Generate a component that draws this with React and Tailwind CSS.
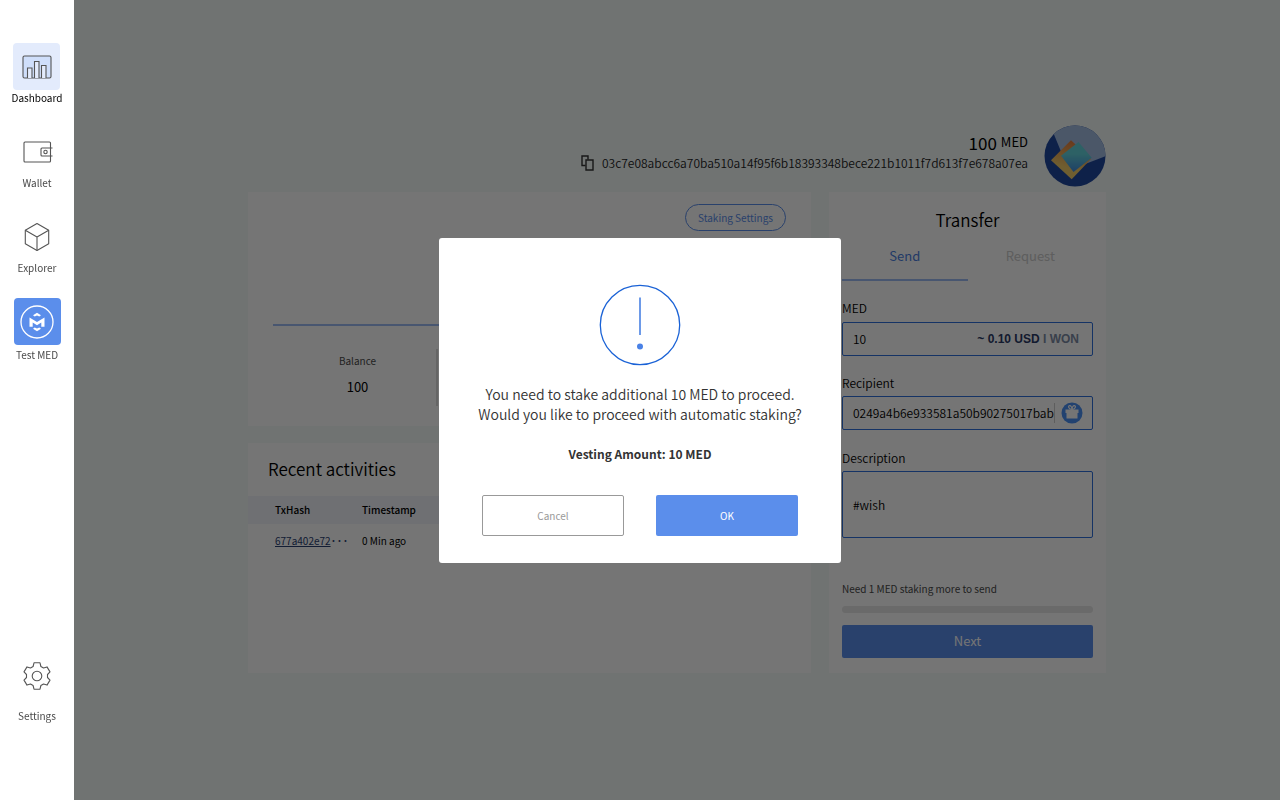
import { useState } from 'react';

const NAV_ITEMS = [
  { id: 'dashboard', label: 'Dashboard', Icon: DashboardIcon },
  { id: 'wallet', label: 'Wallet', Icon: WalletIcon },
  { id: 'explorer', label: 'Explorer', Icon: ExplorerIcon },
];

const ACTIVITIES = [{ hash: '677a402e72', time: '0 Min ago' }];

function DashboardIcon() {
  return (
    <svg width="30" height="24" viewBox="0 0 30 24" fill="none" stroke="#555" strokeWidth="1.1">
      <rect x="1" y="1" width="28" height="22" rx="1.5" fill="#cfdefa" />
      <path fill="#e3ebfc" d="M5.5 23V13h4.5v10M12.500 23V6.500h4.500V23M19.500 23V10.500H24V23" />
    </svg>
  );
}

function WalletIcon() {
  return (
    <svg width="30" height="22" viewBox="-1 0 30 22" overflow="visible" fill="none" stroke="#555" strokeWidth="1.1">
      <path d="M27.500 7V2a1 1 0 0 0-1-1H2a1 1 0 0 0-1 1v18a1 1 0 0 0 1 1h24.500a1 1 0 0 0 1-1v-5" />
      <path d="M29.500 7H19a1 1 0 0 0-1 1v6a1 1 0 0 0 1 1h10.500M27.500 7v8" />
      <circle cx="22.500" cy="11" r="1.700" />
    </svg>
  );
}

function ExplorerIcon() {
  return (
    <svg width="26" height="30" viewBox="0 0 26 30" fill="none" stroke="#555" strokeWidth="1.1" strokeLinejoin="round">
      <path d="M13 1.500 24.700 8.200v13.600L13 28.500 1.300 21.800V8.200z" />
      <path d="M1.300 8.200 13 15l11.700-6.800M13 15v13.500" />
    </svg>
  );
}

function SettingsIcon() {
  return (
    <svg width="28" height="28" viewBox="0 0 28 28" fill="none" stroke="#555" strokeWidth="1.1" strokeLinejoin="round">
      <path d="M11 .800h6l.900 3.700 2.600 1.500 3.500-1.100 3 5-2.500 2.600v3l2.500 2.600-3 5-3.500-1.100-2.600 1.500-.900 3.700h-6l-.900-3.700-2.600-1.500L4 23.100l-3-5 2.500-2.600v-3L1 9.900l3-5L7.500 6l2.600-1.500z" />
      <circle cx="14" cy="14" r="4.800" />
    </svg>
  );
}

function MedLogo() {
  return (
    <svg width="34" height="34" viewBox="0 0 34 34" fill="none">
      <circle cx="17" cy="17" r="16" stroke="#fff" strokeWidth="1.3" />
      <path fill="#fff" d="M9.500 12.500 17 17l7.500-4.500v9.300h-3.200v-4.200L17 20.300l-4.300-2.700v4.200H9.500z" />
      <path fill="#fff" d="m13 10.300 4-2.500 4 2.500-1.700 1.100-2.300-1-2.300 1zM13 23.700l4 2.500 4-2.500-1.700-1.100-2.300 1-2.300-1z" />
    </svg>
  );
}

function CopyIcon() {
  return (
    <svg width="13" height="16" viewBox="0 0 13 16" fill="none" stroke="#333" strokeWidth="1.4">
      <path d="M4.500 10.500H1V1h6v3.500" />
      <path d="M5 5h7v10H5z" />
    </svg>
  );
}

function GiftIcon() {
  return (
    <svg width="22" height="22" viewBox="0 0 22 22" fill="none">
      <circle cx="11" cy="11" r="10.500" fill="#4a90f5" />
      <path fill="#fff" d="M4.500 7.500h13V11h-1v5.500h-11V11h-1z" />
      <path stroke="#fff" strokeWidth="1.2" d="M11 7.500C8 7.500 6.500 4 8.500 3.700 10 3.500 11 5.500 11 7.500c0-2 1-4 2.500-3.800C15.500 4 14 7.500 11 7.500z" />
    </svg>
  );
}

function Avatar() {
  return (
    <svg className="shrink-0" width="62" height="62" viewBox="5 5 62 62">
      <defs>
        <clipPath id="avatar-clip">
          <circle cx="36" cy="36" r="30.500" />
        </clipPath>
        <linearGradient id="avatar-gold" x1="0.6" y1="0" x2="0.4" y2="0.7">
          <stop offset="0" stopColor="#e37a3c" />
          <stop offset="1" stopColor="#f2cc6a" />
        </linearGradient>
        <linearGradient id="avatar-teal" x1="0.5" y1="0" x2="0.5" y2="1">
          <stop offset="0.4" stopColor="#63d3dc" />
          <stop offset="1" stopColor="#418be0" />
        </linearGradient>
      </defs>
      <g clipPath="url(#avatar-clip)">
        <path fill="#2049a0" d="M0 0h72v72H0z" />
        <path fill="#a3bde3" d="M9 0 28 46l13 0L72 34V0z" />
        <path fill="url(#avatar-gold)" d="m32 20.300 20 18.700-19.300 20.300L12 40.300z" />
        <path fill="url(#avatar-teal)" d="m39.500 22 13.200 15.700L34.500 52 22 35.700z" />
      </g>
    </svg>
  );
}

function Sidebar() {
  return (
    <nav className="fixed inset-y-0 left-0 z-30 flex w-[74px] flex-col items-center bg-white pt-[43px] pb-[76px] text-[10px] leading-4 text-[#4a4a4a]">
      {NAV_ITEMS.map(({ id, label, Icon }) => (
        <a
          key={id}
          href={`#${id}`}
          className={`mb-[22px] flex flex-col items-center ${id === 'dashboard' ? 'text-black' : ''}`}
        >
          <span
            className={`flex h-[47px] w-[47px] items-center justify-center rounded ${
              id === 'dashboard' ? 'bg-[#e3ebfc]' : ''
            }`}
          >
            <Icon />
          </span>
          {label}
        </a>
      ))}
      <a href="#test" className="flex flex-col items-center gap-[2px]">
        <span className="flex h-[47px] w-[47px] items-center justify-center rounded bg-[#5b8eeb]">
          <MedLogo />
        </span>
        Test MED
      </a>
      <a href="#settings" className="mt-auto flex flex-col items-center gap-[18px]">
        <SettingsIcon />
        Settings
      </a>
    </nav>
  );
}

function AccountHeader() {
  return (
    <header className="flex items-center justify-end gap-4">
      <div className="flex flex-col items-end pb-[10px]">
        <div className="flex items-start gap-1 text-black">
          <span className="text-[17px] leading-6">100</span>
          <span className="text-[13px] leading-[22px]">MED</span>
        </div>
        <div className="flex items-center gap-2 text-[12px] leading-4 font-[350] text-[#222]">
          <button type="button" aria-label="Copy address">
            <CopyIcon />
          </button>
          <span>03c7e08abcc6a70ba510a14f95f6b18393348bece221b1011f7d613f7e678a07ea</span>
        </div>
      </div>
      <Avatar />
    </header>
  );
}

function BalanceCard() {
  return (
    <section className="flex h-[234px] flex-col bg-white pt-3">
      <button
        type="button"
        className="mr-[25px] h-[27px] self-end rounded-full border border-[#5b8eeb] px-3 text-[10px] text-[#5b8eeb]"
      >
        Staking Settings
      </button>
      <div className="mx-[25px] mt-[93px] h-[2px] bg-[#9dbcf3]" />
      <div className="mt-[23px] ml-[31px] flex h-[57px] w-[159px] flex-col items-center gap-2 border-r-2 border-[#ddd]">
        <span className="pt-1 text-[10px] leading-4 text-[#4a4a4a]">Balance</span>
        <span className="text-[13px] leading-5 text-black">100</span>
      </div>
    </section>
  );
}

function RecentActivities() {
  return (
    <section className="flex-1 bg-white pt-[14px]">
      <h2 className="px-5 text-[17px] leading-6 font-[350] text-black">Recent activities</h2>
      <table className="mt-[15px] w-full text-left text-[10px] leading-4">
        <thead className="bg-[#f1f4fa] text-black">
          <tr className="h-[28px]">
            <th className="w-[114px] pl-[27px] font-medium">TxHash</th>
            <th className="font-medium">Timestamp</th>
          </tr>
        </thead>
        <tbody>
          {ACTIVITIES.map((item) => (
            <tr key={item.hash} className="h-[35px]">
              <td className="pl-[27px] text-[#2a4172]">
                <a href="#tx" className="underline">
                  {item.hash}
                </a>
                <span className="font-bold">···</span>
              </td>
              <td className="text-black">{item.time}</td>
            </tr>
          ))}
        </tbody>
      </table>
    </section>
  );
}

function TransferCard() {
  const [tab, setTab] = useState('send');

  const tabClass = (id) =>
    `h-[36px] pb-3 text-[13px] leading-5 border-b-2 ${
      tab === id ? 'border-[#9dbcf3] text-[#4a7fe0]' : 'border-transparent text-[#ccc]'
    }`;

  return (
    <section className="flex w-[277px] shrink-0 flex-col bg-white px-[13px] pt-4 pb-[15px] text-[12px] leading-4 text-black">
      <h2 className="text-center text-[17px] leading-6 font-[350]">Transfer</h2>
      <div className="mt-[13px] grid grid-cols-2">
        <button type="button" className={tabClass('send')} onClick={() => setTab('send')}>
          Send
        </button>
        <button type="button" className={tabClass('request')} onClick={() => setTab('request')}>
          Request
        </button>
      </div>

      <label htmlFor="amount" className="mt-[19px] font-[350]">
        MED
      </label>
      <div className="mt-[6px] flex h-[34px] items-center rounded-xs border border-[#2f6fdd] px-[10px]">
        <input id="amount" className="w-0 flex-1 font-[350] outline-none" defaultValue="10" />
        <span className="pr-[3px] font-['Liberation_Sans',sans-serif] font-bold text-[#2b3a66]">
          ~ 0.10 USD <span className="text-[#7d8ba5]">I WON</span>
        </span>
      </div>

      <label htmlFor="recipient" className="mt-[19px] font-[350]">
        Recipient
      </label>
      <div className="mt-[5px] flex h-[34px] items-center rounded-xs border border-[#2f6fdd] pr-[9px] pl-[10px]">
        <input
          id="recipient"
          className="h-5 w-0 flex-1 border-r border-[#ccc] font-[350] outline-none"
          defaultValue="0249a4b6e933581a50b90275017bab"
        />
        <button type="button" aria-label="Choose recipient" className="ml-[6px]">
          <GiftIcon />
        </button>
      </div>

      <label htmlFor="description" className="mt-5 font-[350]">
        Description
      </label>
      <textarea
        id="description"
        className="mt-[5px] h-[67px] resize-none rounded-xs border border-[#2f6fdd] px-[10px] py-[25px] font-[350] outline-none"
        defaultValue="#wish"
      />

      <p className="mt-[43px] text-[10px] text-[#4a4a4a]">Need 1 MED staking more to send</p>
      <div className="mt-[9px] h-[7px] rounded-full bg-[#e6e6e6]" />
      <button type="button" className="mt-3 h-[33px] rounded-xs bg-[#5b8eeb] text-[13px] text-white">
        Next
      </button>
    </section>
  );
}

function StakingDialog() {
  return (
    <div className="fixed inset-0 z-20 flex items-center justify-center bg-black/54">
      <div
        role="dialog"
        aria-modal="true"
        className="flex w-[402px] flex-col items-center rounded-[3px] bg-white px-[43px] pt-[46px] pb-[27px] text-[#333]"
      >
        <svg width="82" height="82" viewBox="0 0 82 82" fill="none">
          <circle cx="41" cy="41" r="39.700" stroke="#1a62d6" strokeWidth="1.300" />
          <path stroke="#3c78e0" strokeWidth="1.500" d="M41 13.500v37.500" />
          <circle cx="41" cy="62.500" r="3" fill="#4a82e6" />
        </svg>
        <p className="mt-[18px] text-center text-[14px] leading-5 font-[350] whitespace-nowrap">
          You need to stake additional 10 MED to proceed.
          <br />
          Would you like to proceed with automatic staking?
        </p>
        <p className="mt-5 text-[12px] leading-5 font-bold">Vesting Amount: 10 MED</p>
        <div className="mt-[31px] grid w-full grid-cols-2 gap-8 text-[10px]">
          <button type="button" className="h-[41px] rounded-xs border border-[#999] text-[#999]">
            Cancel
          </button>
          <button type="button" className="h-[41px] rounded-xs bg-[#5b8eeb] text-white">
            OK
          </button>
        </div>
      </div>
    </div>
  );
}

export default function App() {
  return (
    <div className="min-h-screen bg-[#f4faf9] font-['Noto_Sans_CJK_KR',sans-serif]">
      <Sidebar />
      <main className="flex min-h-screen flex-col justify-center pb-[3px] pl-[74px]">
        <div className="mx-auto flex w-full max-w-[858px] flex-col gap-[5px]">
          <AccountHeader />
          <div className="flex gap-[18px]">
            <div className="flex flex-1 flex-col gap-[17px]">
              <BalanceCard />
              <RecentActivities />
            </div>
            <TransferCard />
          </div>
        </div>
      </main>
      <StakingDialog />
    </div>
  );
}
